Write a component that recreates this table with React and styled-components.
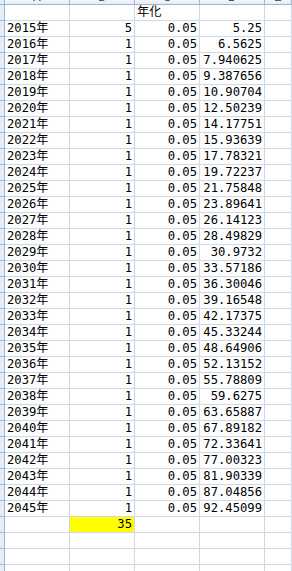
import React from "react";
import styled, { createGlobalStyle } from "styled-components";

const colors = {
  grid: "#d0d7e5",
  headBorder: "#9eb6ce",
  headBg: "#e4ecf7",
  fill: "#ffff00",
};

const GlobalStyle = createGlobalStyle`
  html, body {
    margin: 0;
    padding: 0;
    background: #ffffff;
  }
`;

const Sheet = styled.div`
  display: grid;
  grid-template-columns: 5px 65px 65px 65px 65px 1fr;
  grid-template-rows: 5px;
  grid-auto-rows: 16px;
  width: 292px;
  height: 571px;
  overflow: hidden;
  font-family: "DejaVu Sans Mono", "Noto Sans CJK JP", monospace;
  font-size: 12.2px;
  color: #000;
`;

const Corner = styled.div`
  box-sizing: border-box;
  background: ${colors.headBg};
  border-right: 1px solid ${colors.headBorder};
  border-bottom: 1px solid ${colors.headBorder};
`;

const ColHead = styled.div`
  box-sizing: border-box;
  overflow: hidden;
  display: flex;
  justify-content: center;
  align-items: flex-end;
  background: linear-gradient(#f1f5fb, #e4ecf7);
  border-right: 1px solid ${colors.headBorder};
  border-bottom: 1px solid ${colors.headBorder};
  font-family: "Liberation Sans", Arial, sans-serif;
  font-size: 11px;
  line-height: 11px;
  color: #27413e;
  padding-bottom: 1px;
`;

const RowHead = styled.div`
  box-sizing: border-box;
  background: ${colors.headBg};
  border-right: 1px solid ${colors.headBorder};
  border-bottom: 1px solid ${colors.headBorder};
`;

const Cell = styled.div`
  box-sizing: border-box;
  display: flex;
  align-items: flex-end;
  justify-content: ${(p) => (p.$align === "right" ? "flex-end" : "flex-start")};
  padding: 0 2px 1px 2px;
  background: ${(p) => (p.$fill ? colors.fill : "transparent")};
  border-right: 1px solid ${colors.grid};
  border-bottom: 1px solid ${colors.grid};
  line-height: 13px;
  white-space: nowrap;
  overflow: hidden;
`;

const values = [
  "5.25", "6.5625", "7.940625", "9.387656", "10.90704", "12.50239",
  "14.17751", "15.93639", "17.78321", "19.72237", "21.75848", "23.89641",
  "26.14123", "28.49829", "30.9732", "33.57186", "36.30046", "39.16548",
  "42.17375", "45.33244", "48.64906", "52.13152", "55.78809", "59.6275",
  "63.65887", "67.89182", "72.33641", "77.00323", "81.90339", "87.04856",
  "92.45099",
];

const rows = [
  ["", "", "年化", ""],
  ...values.map((v, i) => [`${2015 + i}年`, i === 0 ? "5" : "1", "0.05", v]),
  ["", "35", "", ""],
  ["", "", "", ""],
  ["", "", "", ""],
  ["", "", "", ""],
];

const App = () => (
  <>
    <GlobalStyle />
    <Sheet>
      <Corner />
      {["A", "B", "C", "D", "E"].map((l) => (
        <ColHead key={l}>{l}</ColHead>
      ))}
      {rows.map((row, r) => (
        <React.Fragment key={r}>
          <RowHead />
          <Cell>{row[0]}</Cell>
          <Cell $align="right" $fill={row[1] === "35"}>
            {row[1]}
          </Cell>
          <Cell $align={r === 0 ? "left" : "right"}>{row[2]}</Cell>
          <Cell $align="right">{row[3]}</Cell>
          <Cell />
        </React.Fragment>
      ))}
    </Sheet>
  </>
);

export default App;
